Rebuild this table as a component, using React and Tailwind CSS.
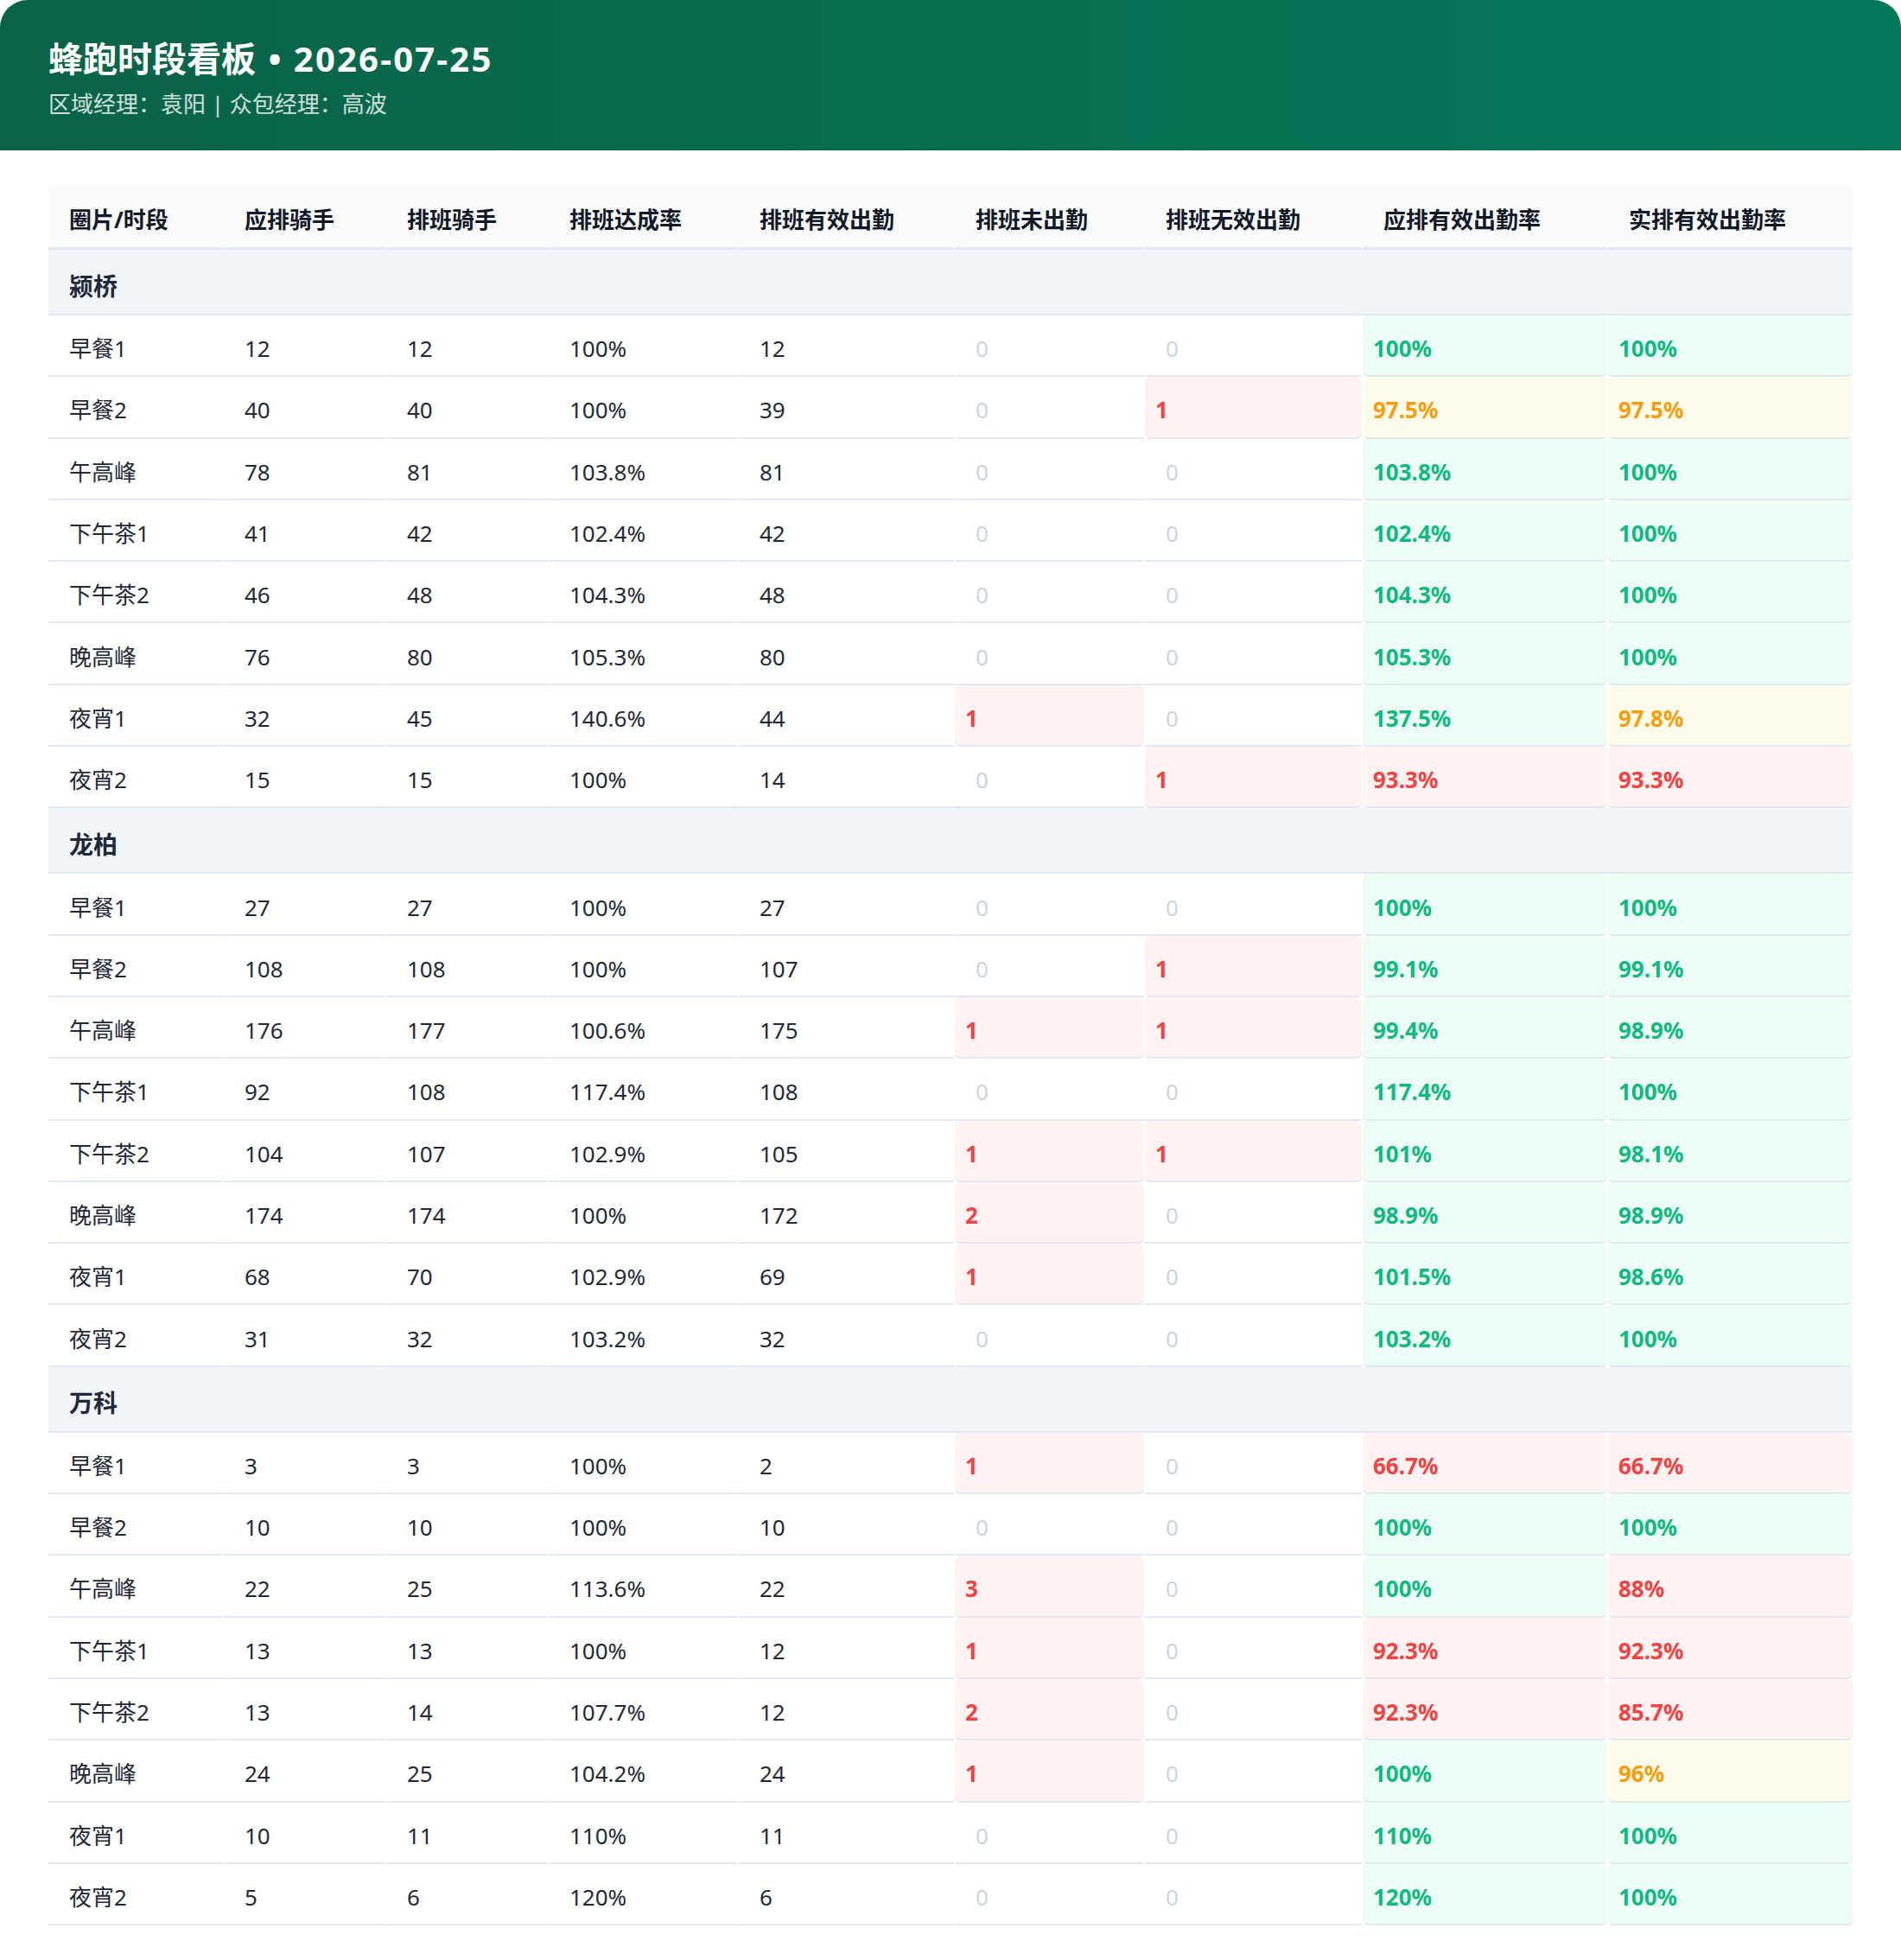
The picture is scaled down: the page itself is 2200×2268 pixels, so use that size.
const COLS = 'grid grid-cols-[202px_187px_187px_219px_249px_219px_251px_283px_283px] gap-x-[1px]';

const headers = ['圈片/时段', '应排骑手', '排班骑手', '排班达成率', '排班有效出勤', '排班未出勤', '排班无效出勤', '应排有效出勤率', '实排有效出勤率'];

// [时段, 应排, 排班, 达成率, 有效出勤, 未出勤, 无效出勤, 应排有效率, 实排有效率]
const groups = [
  {
    name: '颍桥',
    rows: [
      ['早餐1', 12, 12, '100%', 12, 0, 0, '100%', '100%'],
      ['早餐2', 40, 40, '100%', 39, 0, 1, '97.5%', '97.5%'],
      ['午高峰', 78, 81, '103.8%', 81, 0, 0, '103.8%', '100%'],
      ['下午茶1', 41, 42, '102.4%', 42, 0, 0, '102.4%', '100%'],
      ['下午茶2', 46, 48, '104.3%', 48, 0, 0, '104.3%', '100%'],
      ['晚高峰', 76, 80, '105.3%', 80, 0, 0, '105.3%', '100%'],
      ['夜宵1', 32, 45, '140.6%', 44, 1, 0, '137.5%', '97.8%'],
      ['夜宵2', 15, 15, '100%', 14, 0, 1, '93.3%', '93.3%'],
    ],
  },
  {
    name: '龙柏',
    rows: [
      ['早餐1', 27, 27, '100%', 27, 0, 0, '100%', '100%'],
      ['早餐2', 108, 108, '100%', 107, 0, 1, '99.1%', '99.1%'],
      ['午高峰', 176, 177, '100.6%', 175, 1, 1, '99.4%', '98.9%'],
      ['下午茶1', 92, 108, '117.4%', 108, 0, 0, '117.4%', '100%'],
      ['下午茶2', 104, 107, '102.9%', 105, 1, 1, '101%', '98.1%'],
      ['晚高峰', 174, 174, '100%', 172, 2, 0, '98.9%', '98.9%'],
      ['夜宵1', 68, 70, '102.9%', 69, 1, 0, '101.5%', '98.6%'],
      ['夜宵2', 31, 32, '103.2%', 32, 0, 0, '103.2%', '100%'],
    ],
  },
  {
    name: '万科',
    rows: [
      ['早餐1', 3, 3, '100%', 2, 1, 0, '66.7%', '66.7%'],
      ['早餐2', 10, 10, '100%', 10, 0, 0, '100%', '100%'],
      ['午高峰', 22, 25, '113.6%', 22, 3, 0, '100%', '88%'],
      ['下午茶1', 13, 13, '100%', 12, 1, 0, '92.3%', '92.3%'],
      ['下午茶2', 13, 14, '107.7%', 12, 2, 0, '92.3%', '85.7%'],
      ['晚高峰', 24, 25, '104.2%', 24, 1, 0, '100%', '96%'],
      ['夜宵1', 10, 11, '110%', 11, 0, 0, '110%', '100%'],
      ['夜宵2', 5, 6, '120%', 6, 0, 0, '120%', '100%'],
    ],
  },
];

const cellBase = 'flex items-center h-[71.3px] pt-[8px] border-b-2 border-[#e2e8f0] text-[26px]';

const rateTone = (value) => {
  const n = parseFloat(value);
  if (n >= 98) return 'bg-[#ecfdf5] text-[#10b981]';
  if (n >= 95) return 'bg-[#fffbeb] text-[#f59e0b]';
  return 'bg-[#fef2f2] text-[#ef4444]';
};

const PlainCell = ({ children }) => (
  <div className={`${cellBase} px-[24px] text-[#1f2937]`}>{children}</div>
);

const CountCell = ({ value }) => {
  if (value === 0) {
    return <div className={`${cellBase} px-[24px] text-[#cbd5e1]`}>0</div>;
  }
  return (
    <div className={`${cellBase} pl-[12px] rounded-[6px] font-bold bg-[#fef2f2] text-[#ef4444]`}>{value}</div>
  );
};

const RateCell = ({ value }) => (
  <div className={`${cellBase} pl-[12px] rounded-[6px] font-bold ${rateTone(value)}`}>{value}</div>
);

const DataRow = ({ row }) => {
  const [slot, should, scheduled, reach, valid, absent, invalid, shouldRate, realRate] = row;
  return (
    <div className={COLS}>
      <PlainCell>{slot}</PlainCell>
      <PlainCell>{should}</PlainCell>
      <PlainCell>{scheduled}</PlainCell>
      <PlainCell>{reach}</PlainCell>
      <PlainCell>{valid}</PlainCell>
      <CountCell value={absent} />
      <CountCell value={invalid} />
      <RateCell value={shouldRate} />
      <RateCell value={realRate} />
    </div>
  );
};

const App = () => {
  return (
    <div className="min-h-screen bg-white font-['Noto_Sans','Noto_Sans_CJK_SC',sans-serif]">
      {/* Header */}
      <div className="h-[174px] rounded-t-[32px] bg-linear-to-r from-[#0a6348] to-[#05785a] px-[56px] pt-[44px]">
        <h1 className="text-[40px] leading-[48px] font-bold text-white">
          蜂跑时段看板<span className="mx-[4px]"> • </span>
          <span className="tracking-[2.2px]">2026-07-25</span>
        </h1>
        <p className="mt-[8px] text-[26px] leading-[40px] text-white/80">区域经理：袁阳 | 众包经理：高波</p>
      </div>

      {/* Table */}
      <div className="px-[56px] pt-[40px] pb-[36px]">
        <div className={`${COLS} bg-[#f8fafc]`}>
          {headers.map((h) => (
            <div
              key={h}
              className="flex items-center h-[75px] pt-[8px] px-[24px] border-b-[3px] border-[#e2e8f0] text-[26px] font-bold text-[#111827]"
            >
              {h}
            </div>
          ))}
        </div>

        {groups.map((g) => (
          <div key={g.name}>
            <div className="flex items-center h-[76px] pt-[9px] px-[24px] bg-[#f1f5f9] border-b-2 border-[#e2e8f0] text-[28px] font-bold text-[#1e293b]">
              {g.name}
            </div>
            {g.rows.map((row) => (
              <DataRow key={g.name + row[0]} row={row} />
            ))}
          </div>
        ))}
      </div>
    </div>
  );
};

export default App;
